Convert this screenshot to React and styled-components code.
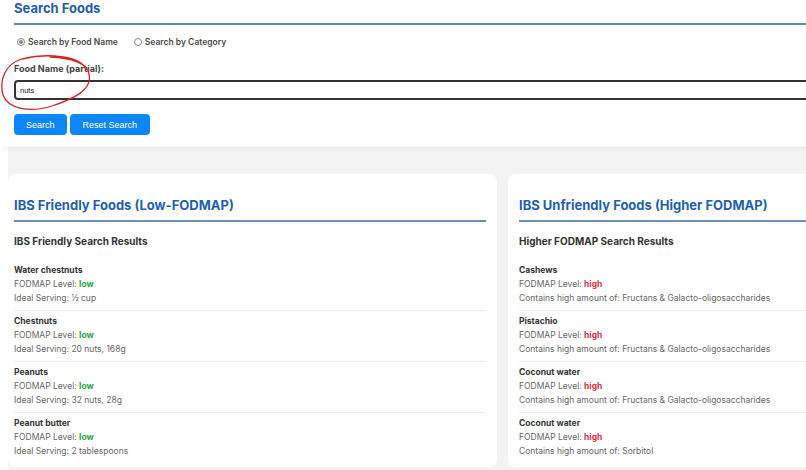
import React, { useState } from 'react';
import styled, { createGlobalStyle } from 'styled-components';

const GlobalStyle = createGlobalStyle`
  html, body {
    margin: 0;
    padding: 0;
    background: #ffffff;
    overflow: hidden;
    font-family: Inter, "Noto Sans", sans-serif;
  }
`;

const Page = styled.div`
  position: relative;
  width: 1000px;
`;

const SearchPanel = styled.section`
  background: #ffffff;
  padding: 0 0 12px 14px;
  box-shadow: 0 2px 4px rgba(0, 0, 0, 0.06);
  position: relative;
  z-index: 1;
`;

const Title = styled.h1`
  margin: 0;
  font-size: 13px;
  line-height: 16px;
  font-weight: 700;
  color: #1f5fae;
  padding-bottom: 7px;
  border-bottom: 2px solid #5d88bf;
`;

const RadioRow = styled.div`
  display: flex;
  gap: 16px;
  margin-top: 10px;
  padding-left: 3px;
`;

const RadioLabel = styled.label`
  display: flex;
  align-items: center;
  gap: 3px;
  font-size: 8.5px;
  line-height: 14px;
  font-weight: 600;
  color: #4a4a4a;
`;

const RadioDot = styled.span`
  width: 6px;
  height: 6px;
  border-radius: 50%;
  border: 1px solid #8a8a8a;
  display: flex;
  align-items: center;
  justify-content: center;
  &::after {
    content: '';
    width: 4px;
    height: 4px;
    border-radius: 50%;
    background: ${(p) => (p.$checked ? '#8a8a8a' : 'transparent')};
  }
`;

const FieldLabel = styled.div`
  margin-top: 13px;
  font-size: 9px;
  line-height: 14px;
  font-weight: 700;
  color: #444;
`;

const TextInput = styled.input`
  display: block;
  box-sizing: border-box;
  margin-top: 4px;
  width: 900px;
  height: 20px;
  border: 2px solid #333;
  border-radius: 4px;
  padding: 0 4px;
  font-family: "Liberation Sans", Arial, sans-serif;
  font-size: 7.5px;
  color: #222;
  outline: none;
`;

const ButtonRow = styled.div`
  display: flex;
  gap: 3px;
  margin-top: 14px;
`;

const Button = styled.button`
  height: 21px;
  padding: 0 ${(p) => p.$pad}px;
  border: none;
  border-radius: 4px;
  background: #0d86f7;
  color: #fff;
  font-family: "Liberation Sans", Arial, sans-serif;
  font-size: 9px;
  cursor: pointer;
`;

const Main = styled.main`
  margin-left: 8px;
  background: #f3f3f3;
  padding: 27px 0 3px 0;
  display: grid;
  grid-template-columns: 489px 489px;
  align-items: start;
  gap: 11px;
`;

const Card = styled.section`
  background: #fff;
  border-radius: 8px;
  padding: 23px 11px 4px ${(p) => p.$inset}px;
`;

const CardTitle = styled.h2`
  margin: 0;
  font-size: 13px;
  line-height: 16px;
  font-weight: 700;
  color: #1f5fae;
  padding-bottom: 7px;
  border-bottom: 2px solid #6a90c2;
`;

const SubTitle = styled.h3`
  margin: 12px 0 0 0;
  font-size: 10px;
  line-height: 14px;
  font-weight: 700;
  color: #333;
`;

const List = styled.div`
  margin-top: 12px;
`;

const Item = styled.div`
  padding: 3px 0 5px 0;
  border-bottom: ${(p) => (p.$last ? 'none' : '1px solid #ececec')};
`;

const ItemName = styled.div`
  font-size: 8.5px;
  line-height: 14px;
  font-weight: 700;
  color: #333;
`;

const ItemLine = styled.div`
  font-size: 8.5px;
  line-height: 14px;
  color: #666;
`;

const Level = styled.span`
  font-weight: 700;
  color: ${(p) => (p.$high ? '#dc3545' : '#28a745')};
`;

const Annotation = styled.svg`
  position: absolute;
  left: 0;
  top: 0;
  pointer-events: none;
  z-index: 2;
`;

const friendly = [
  { name: 'Water chestnuts', serving: '½ cup' },
  { name: 'Chestnuts', serving: '20 nuts, 168g' },
  { name: 'Peanuts', serving: '32 nuts, 28g' },
  { name: 'Peanut butter', serving: '2 tablespoons' },
];

const unfriendly = [
  { name: 'Cashews', contains: 'Fructans & Galacto-oligosaccharides' },
  { name: 'Pistachio', contains: 'Fructans & Galacto-oligosaccharides' },
  { name: 'Coconut water', contains: 'Fructans & Galacto-oligosaccharides' },
  { name: 'Coconut water', contains: 'Sorbitol' },
];

export default function App() {
  const [mode, setMode] = useState('name');
  const [query, setQuery] = useState('nuts');

  return (
    <Page>
      <GlobalStyle />
      <SearchPanel>
        <Title>Search Foods</Title>
        <RadioRow>
          <RadioLabel onClick={() => setMode('name')}>
            <RadioDot $checked={mode === 'name'} />
            Search by Food Name
          </RadioLabel>
          <RadioLabel onClick={() => setMode('category')}>
            <RadioDot $checked={mode === 'category'} />
            Search by Category
          </RadioLabel>
        </RadioRow>
        <FieldLabel>Food Name (partial):</FieldLabel>
        <TextInput value={query} onChange={(e) => setQuery(e.target.value)} />
        <ButtonRow>
          <Button $pad={12}>Search</Button>
          <Button $pad={13}>Reset Search</Button>
        </ButtonRow>
      </SearchPanel>

      <Main>
        <Card $inset={6}>
          <CardTitle>IBS Friendly Foods (Low-FODMAP)</CardTitle>
          <SubTitle>IBS Friendly Search Results</SubTitle>
          <List>
            {friendly.map((f, i) => (
              <Item key={i} $last={i === friendly.length - 1}>
                <ItemName>{f.name}</ItemName>
                <ItemLine>
                  FODMAP Level: <Level>low</Level>
                </ItemLine>
                <ItemLine>Ideal Serving: {f.serving}</ItemLine>
              </Item>
            ))}
          </List>
        </Card>
        <Card $inset={11}>
          <CardTitle>IBS Unfriendly Foods (Higher FODMAP)</CardTitle>
          <SubTitle>Higher FODMAP Search Results</SubTitle>
          <List>
            {unfriendly.map((f, i) => (
              <Item key={i} $last={i === unfriendly.length - 1}>
                <ItemName>{f.name}</ItemName>
                <ItemLine>
                  FODMAP Level: <Level $high>high</Level>
                </ItemLine>
                <ItemLine>Contains high amount of: {f.contains}</ItemLine>
              </Item>
            ))}
          </List>
        </Card>
      </Main>

      <Annotation width="100" height="120" viewBox="0 0 100 120">
        <path
          d="M 86 70 C 82 55, 45 53, 22 59 C 5 64, -1 80, 3 95 C 8 109, 30 113, 52 106 C 73 99, 93 90, 89 74 C 87 63, 72 58, 50 57"
          fill="none"
          stroke="#e02020"
          strokeWidth="1.3"
          strokeLinecap="round"
        />
      </Annotation>
    </Page>
  );
}
